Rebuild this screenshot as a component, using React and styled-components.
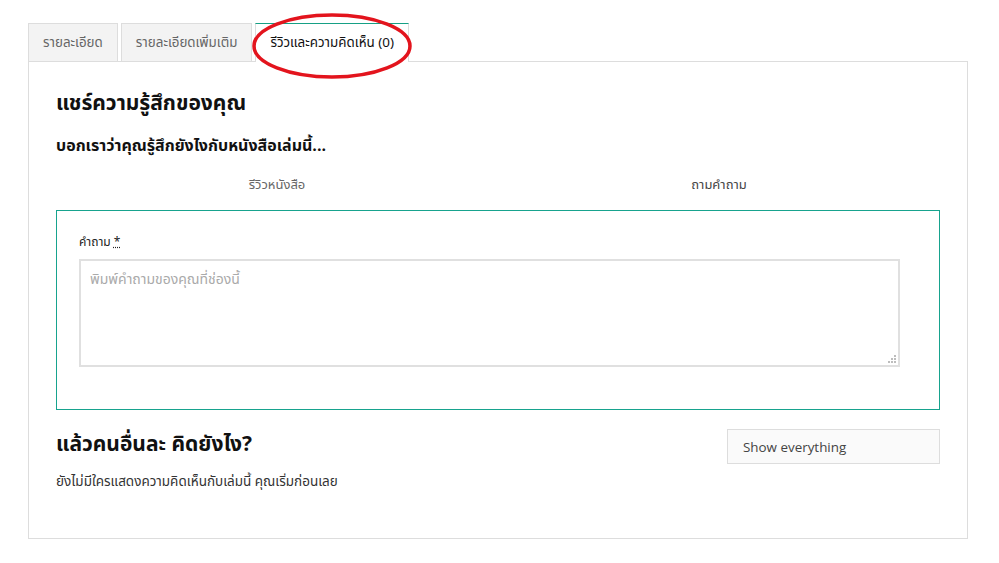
import React, { useState } from 'react';
import styled, { createGlobalStyle } from 'styled-components';

const GlobalStyle = createGlobalStyle`
    body {
        margin: 0;
        background: #ffffff;
        font-family: 'Noto Sans Thai', 'Noto Sans', 'Liberation Sans', sans-serif;
        color: #222;
    }
`;

const tabs = ['รายละเอียด', 'รายละเอียดเพิ่มเติม', 'รีวิวและความคิดเห็น (0)'];

const gripDots = [
    [6, 0],
    [3, 3],
    [6, 3],
    [0, 6],
    [3, 6],
    [6, 6]
];

const App = () => {
    const [active, setActive] = useState(2);
    const [mode, setMode] = useState(1);

    return (
        <Page>
            <GlobalStyle />
            <TabBar>
                {tabs.map((label, i) => (
                    <Tab key={label} $active={i === active} onClick={() => setActive(i)}>
                        {label}
                    </Tab>
                ))}
                <Circle width='170' height='72' viewBox='0 0 170 72'>
                    <ellipse
                        cx='85'
                        cy='36'
                        rx='78'
                        ry='31'
                        fill='none'
                        stroke='#e3141d'
                        strokeWidth='3.5'
                    />
                </Circle>
            </TabBar>
            <Panel>
                <Title>แชร์ความรู้สึกของคุณ</Title>
                <Subtitle>บอกเราว่าคุณรู้สึกยังไงกับหนังสือเล่มนี้...</Subtitle>
                <ModeRow>
                    <ModeButton $active={mode === 0} onClick={() => setMode(0)}>
                        รีวิวหนังสือ
                    </ModeButton>
                    <ModeButton $active={mode === 1} onClick={() => setMode(1)}>
                        ถามคำถาม
                    </ModeButton>
                </ModeRow>
                <FormBox>
                    <Label>
                        คำถาม <Required>*</Required>
                    </Label>
                    <TextAreaWrap>
                        <TextArea placeholder='พิมพ์คำถามของคุณที่ช่องนี้' />
                        <Grip width='8' height='8' viewBox='0 0 8 8'>
                            {gripDots.map(([x, y]) => (
                                <rect key={`${x}-${y}`} x={x} y={y} width='2' height='2' fill='#bdbdbd' />
                            ))}
                        </Grip>
                    </TextAreaWrap>
                </FormBox>
                <OthersRow>
                    <Title>แล้วคนอื่นละ คิดยังไง?</Title>
                    <FilterSelect>
                        <option>Show everything</option>
                    </FilterSelect>
                </OthersRow>
                <EmptyText>ยังไม่มีใครแสดงความคิดเห็นกับเล่มนี้ คุณเริ่มก่อนเลย</EmptyText>
            </Panel>
        </Page>
    );
};

const Page = styled.div`
    width: 940px;
    padding: 23px 0 0 28px;
`;

const TabBar = styled.div`
    position: relative;
    display: flex;
    gap: 3px;
    height: 38px;
`;

const Tab = styled.button`
    height: ${(props) => (props.$active ? '39px' : '38px')};
    padding: 0 14px;
    font-family: inherit;
    font-size: 13.4px;
    color: ${(props) => (props.$active ? '#111' : '#666')};
    background: ${(props) => (props.$active ? '#ffffff' : '#f3f3f3')};
    border: 1px solid #dddddd;
    border-top-color: ${(props) => (props.$active ? '#16a085' : '#dddddd')};
    border-bottom: none;
    cursor: pointer;
    position: relative;
    z-index: 1;
`;

const Circle = styled.svg`
    position: absolute;
    left: 219px;
    top: -13px;
    z-index: 2;
    pointer-events: none;
`;

const Panel = styled.div`
    border: 1px solid #dddddd;
    padding: 26px 27px 0 27px;
    height: 450px;
`;

const Title = styled.h2`
    margin: 0;
    font-size: 21px;
    font-weight: 700;
    line-height: 32px;
    color: #111;
`;

const Subtitle = styled.h3`
    margin: 13px 0 0;
    font-size: 16px;
    font-weight: 700;
    line-height: 26px;
    color: #111;
`;

const ModeRow = styled.div`
    display: grid;
    grid-template-columns: 1fr 1fr;
    margin-top: 13px;
    height: 38px;
`;

const ModeButton = styled.button`
    background: none;
    border: none;
    font-family: inherit;
    font-size: 13px;
    color: ${(props) => (props.$active ? '#444' : '#666')};
    cursor: pointer;
    padding: 0;
    height: 26px;
`;

const FormBox = styled.div`
    border: 1px solid #17a38e;
    padding: 21px 39px 42px 22px;
`;

const Label = styled.div`
    font-size: 12px;
    line-height: 20px;
    color: #222;
    margin-bottom: 7px;
`;

const Required = styled.span`
    text-decoration: underline dotted;
`;

const TextAreaWrap = styled.div`
    position: relative;
`;

const TextArea = styled.textarea`
    display: block;
    box-sizing: border-box;
    width: 100%;
    height: 108px;
    border: 2px solid #e0e0e0;
    padding: 8px 9px;
    font-family: inherit;
    font-size: 14px;
    color: #333;
    outline: none;
    resize: none;

    &::placeholder {
        color: #aaa;
    }
`;

const Grip = styled.svg`
    position: absolute;
    right: 4px;
    bottom: 4px;
    pointer-events: none;
`;

const OthersRow = styled.div`
    display: flex;
    justify-content: space-between;
    align-items: flex-start;
    margin-top: 19px;
`;

const FilterSelect = styled.select`
    width: 213px;
    height: 35px;
    padding: 0 15px;
    border: 1px solid #dddddd;
    background: #fafafa;
    font-family: 'Open Sans', 'Liberation Sans', sans-serif;
    font-size: 13.4px;
    color: #444;
    appearance: none;
    outline: none;
`;

const EmptyText = styled.p`
    margin: 8px 0 0;
    font-size: 13.5px;
    color: #333;
`;

export default App;
